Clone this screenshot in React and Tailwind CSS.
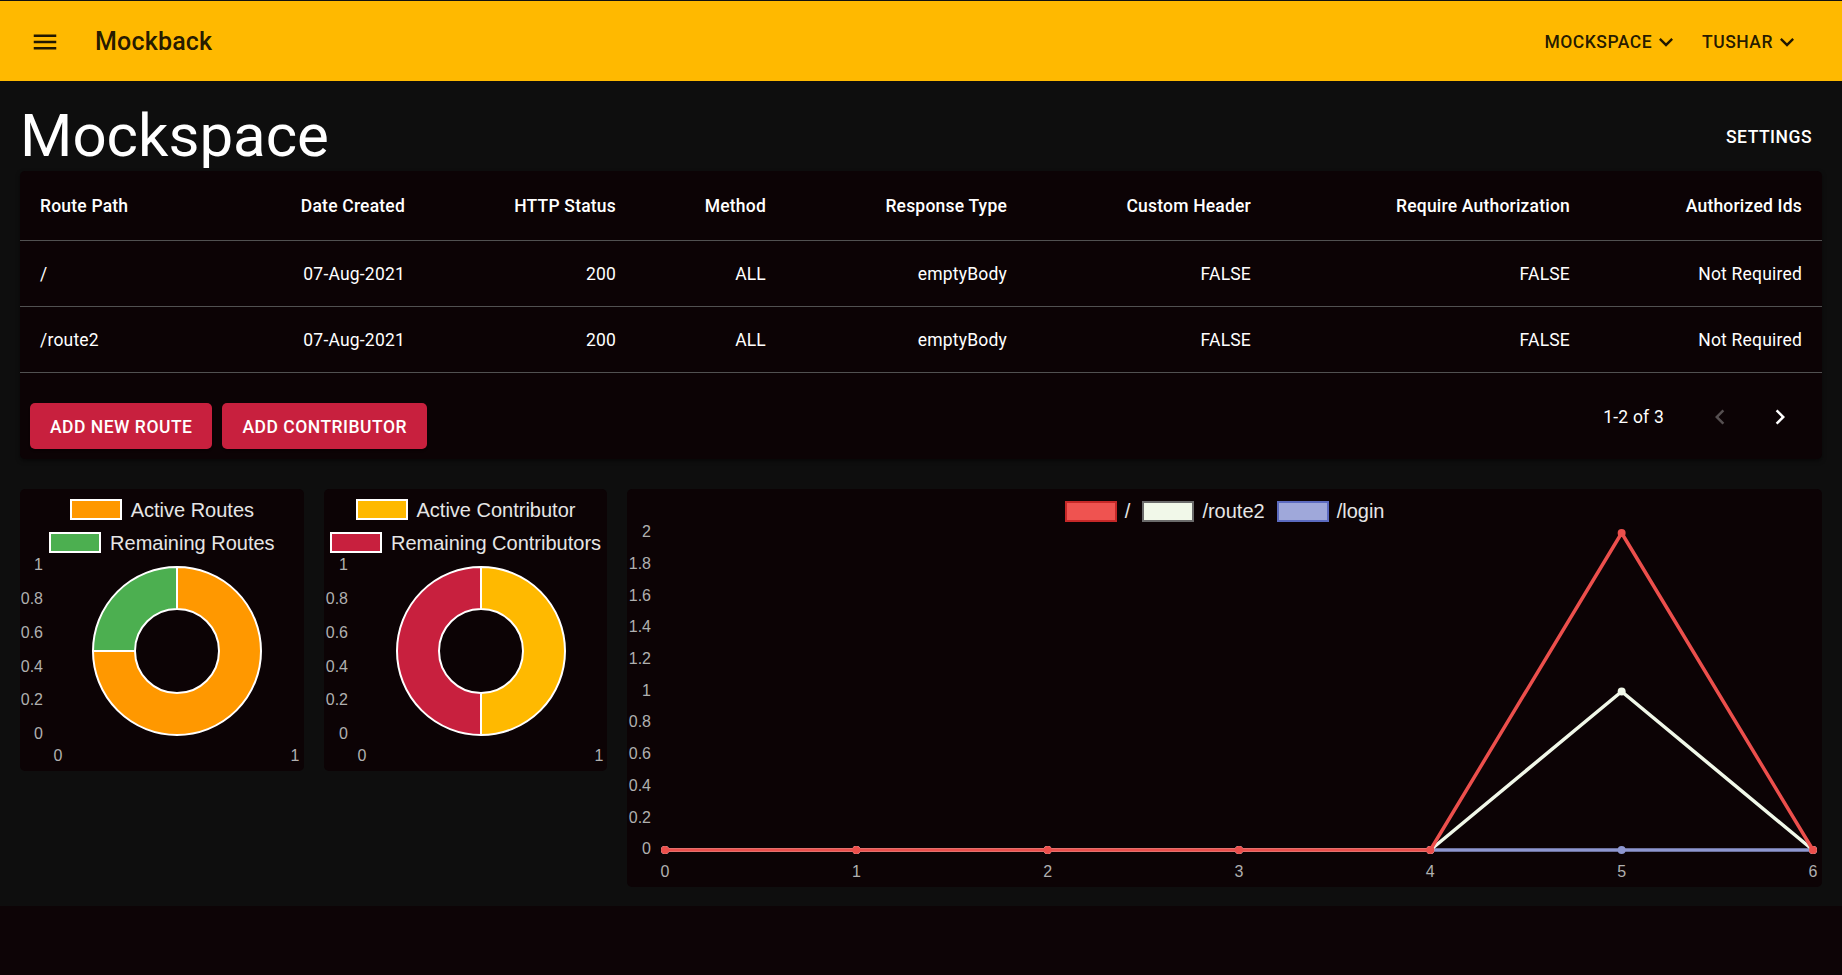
import React from "react";

const cols = "grid grid-cols-[200px_205px_211px_150px_241px_244px_319px_232px]";

const headers = [
  "Route Path",
  "Date Created",
  "HTTP Status",
  "Method",
  "Response Type",
  "Custom Header",
  "Require Authorization",
  "Authorized Ids",
];

const routes = [
  ["/", "07-Aug-2021", "200", "ALL", "emptyBody", "FALSE", "FALSE", "Not Required"],
  ["/route2", "07-Aug-2021", "200", "ALL", "emptyBody", "FALSE", "FALSE", "Not Required"],
];

const chartFont = "'Liberation Sans', Arial, sans-serif";

function arc(cx, cy, r, r0, a0, a1) {
  const p = (rad, a) => [
    cx + rad * Math.sin((a * Math.PI) / 180),
    cy - rad * Math.cos((a * Math.PI) / 180),
  ];
  const large = a1 - a0 > 180 ? 1 : 0;
  const [x0, y0] = p(r, a0);
  const [x1, y1] = p(r, a1);
  const [x2, y2] = p(r0, a1);
  const [x3, y3] = p(r0, a0);
  return `M${x0} ${y0} A${r} ${r} 0 ${large} 1 ${x1} ${y1} L${x2} ${y2} A${r0} ${r0} 0 ${large} 0 ${x3} ${y3} Z`;
}

function ChevronDown() {
  return (
    <svg width="28" height="28" viewBox="0 0 24 24" fill="currentColor">
      <path d="M16.59 8.59 12 13.17 7.41 8.59 6 10l6 6 6-6z" />
    </svg>
  );
}

function LegendBox({ fill, border }) {
  return (
    <span
      className="inline-block w-[52px] h-[21px] border-2"
      style={{ background: fill, borderColor: border }}
    />
  );
}

function DoughnutCard({ legend, segments, labelRight, width }) {
  const ticks = ["1", "0.8", "0.6", "0.4", "0.2", "0"];
  return (
    <div className="col-span-2 h-[282px] rounded-[5px] bg-[#0c0305]">
      <div className="flex flex-col items-center pt-[4px] h-[72px]">
        {legend.map((l) => (
          <div key={l.label} className="flex items-center gap-[9px] h-[33px]">
            <LegendBox fill={l.color} border="#ffffff" />
            <span className="text-[20px] text-[#e6e6e6] font-['Liberation_Sans',Arial,sans-serif]">
              {l.label}
            </span>
          </div>
        ))}
      </div>
      <svg width={width} height="210" fontFamily={chartFont} className="overflow-visible">
        {ticks.map((t, i) => (
          <text
            key={t}
            x={labelRight}
            y={5 + i * 33.8}
            textAnchor="end"
            dominantBaseline="middle"
            fontSize="16"
            fill="#b0b0b0"
          >
            {t}
          </text>
        ))}
        <text x="38" y="196" textAnchor="middle" dominantBaseline="middle" fontSize="16" fill="#b0b0b0">
          0
        </text>
        <text x="275" y="196" textAnchor="middle" dominantBaseline="middle" fontSize="16" fill="#b0b0b0">
          1
        </text>
        {segments.map((s, i) => (
          <path
            key={i}
            d={arc(157, 90, 84, 42, s.from, s.to)}
            fill={s.color}
            stroke="#ffffff"
            strokeWidth="2"
          />
        ))}
      </svg>
    </div>
  );
}

function LineCard() {
  const x0 = 38;
  const step = 191.33;
  const yZero = 321;
  const unit = 158.5;
  const yTicks = ["2", "1.8", "1.6", "1.4", "1.2", "1", "0.8", "0.6", "0.4", "0.2", "0"];
  const sets = [
    { label: "/login", color: "#9fa8da", border: "#5c6bc0", line: "#8e97d0", data: [0, 0, 0, 0, 0, 0, 0] },
    { label: "/route2", color: "#f1f8e9", border: "#6b6b6b", line: "#f1f8e9", data: [0, 0, 0, 0, 0, 1, 0] },
    { label: "/", color: "#ef5350", border: "#c62828", line: "#ec4f4c", data: [0, 0, 0, 0, 0, 2, 0] },
  ];
  const legend = [sets[2], sets[1], sets[0]];

  return (
    <div className="col-span-8 h-[398px] rounded-[5px] bg-[#0c0305]">
      <div className="flex items-center justify-center gap-[12px] h-[40px] pt-[4px]">
        {legend.map((s) => (
          <div key={s.label} className="flex items-center gap-[8px]">
            <LegendBox fill={s.color} border={s.border} />
            <span className="text-[20px] text-[#e6e6e6] font-['Liberation_Sans',Arial,sans-serif]">
              {s.label}
            </span>
          </div>
        ))}
      </div>
      <svg width="1195" height="358" fontFamily={chartFont} className="overflow-visible">
        {yTicks.map((t, i) => (
          <text
            key={t}
            x="24"
            y={4 + i * 31.7}
            textAnchor="end"
            dominantBaseline="middle"
            fontSize="16"
            fill="#b0b0b0"
          >
            {t}
          </text>
        ))}
        {[0, 1, 2, 3, 4, 5, 6].map((n) => (
          <text
            key={n}
            x={x0 + n * step}
            y="344"
            textAnchor="middle"
            dominantBaseline="middle"
            fontSize="16"
            fill="#b0b0b0"
          >
            {n}
          </text>
        ))}
        {sets.map((s) => (
          <g key={s.label}>
            <polyline
              points={s.data.map((v, i) => `${x0 + i * step},${yZero - v * unit}`).join(" ")}
              fill="none"
              stroke={s.line}
              strokeWidth="3.5"
              strokeLinejoin="round"
            />
            {s.data.map((v, i) => (
              <circle key={i} cx={x0 + i * step} cy={yZero - v * unit} r="4" fill={s.line} />
            ))}
          </g>
        ))}
      </svg>
    </div>
  );
}

export default function App() {
  return (
    <div className="min-h-screen bg-[#0d0406] font-['Roboto',sans-serif]">
      <header className="h-[81px] border-t border-[#111111] bg-[#ffb900] flex items-center pt-[2px] pl-[30px] pr-[41px] text-[rgba(0,0,0,0.87)]">
        <svg width="30" height="30" viewBox="0 0 24 24" fill="currentColor">
          <path d="M3 18h18v-2H3v2zm0-5h18v-2H3v2zm0-7v2h18V6H3z" />
        </svg>
        <h1 className="ml-[35px] text-[25px] font-medium leading-[40px] tracking-[0.2px]">Mockback</h1>
        <div className="ml-auto flex items-center text-[17.5px] font-medium uppercase tracking-[0.5px]">
          <span>Mockspace</span>
          <ChevronDown />
          <span className="ml-[22px]">Tushar</span>
          <ChevronDown />
        </div>
      </header>

      <main className="bg-[#0e0e0e] px-[20px] pt-[20px] pb-[19px] text-white">
        <div className="flex items-center justify-between h-[70px]">
          <h2 className="text-[60px] leading-[70px] font-normal">Mockspace</h2>
          <button className="px-[10px] pt-[9px] pb-[7px] text-[17.5px] font-medium uppercase tracking-[0.5px]">
            Settings
          </button>
        </div>

        <div className="rounded-[5px] bg-[#0c0305] shadow-[0_2px_4px_rgba(0,0,0,0.5)] tracking-[0.2px]">
          <div className={`${cols} h-[70px] items-center border-b border-[#515151] text-[17.5px] font-medium pt-[2px]`}>
            {headers.map((h, i) => (
              <div key={h} className={`px-[20px] ${i === 0 ? "text-left" : "text-right"}`}>
                {h}
              </div>
            ))}
          </div>
          {routes.map((r) => (
            <div
              key={r[0]}
              className={`${cols} h-[66px] items-center border-b border-[#515151] text-[17.5px] pt-[2px]`}
            >
              {r.map((c, i) => (
                <div key={i} className={`px-[20px] ${i === 0 ? "text-left" : "text-right"}`}>
                  {c}
                </div>
              ))}
            </div>
          ))}
          <div className="flex justify-between h-[86px]">
            <div className="flex gap-[10px] pl-[10px] pt-[30px]">
              <button className="h-[46px] px-[20px] pt-[2px] rounded-[5px] bg-[#c8203e] text-[17.5px] font-medium uppercase tracking-[0.5px] shadow-[0_3px_1px_-2px_rgba(0,0,0,0.2),0_2px_2px_rgba(0,0,0,0.14)]">
                Add New Route
              </button>
              <button className="h-[46px] px-[20px] pt-[2px] rounded-[5px] bg-[#c8203e] text-[17.5px] font-medium uppercase tracking-[0.5px] shadow-[0_3px_1px_-2px_rgba(0,0,0,0.2),0_2px_2px_rgba(0,0,0,0.14)]">
                Add Contributor
              </button>
            </div>
            <div className="flex items-center h-[88px] pr-[12px] text-[17.5px]">
              <span>1-2 of 3</span>
              <button className="ml-[26px] p-[15px] text-[rgba(255,255,255,0.3)]">
                <svg width="30" height="30" viewBox="0 0 24 24" fill="currentColor">
                  <path d="M15.41 7.41 14 6l-6 6 6 6 1.41-1.41L10.83 12z" />
                </svg>
              </button>
              <button className="p-[15px] text-white">
                <svg width="30" height="30" viewBox="0 0 24 24" fill="currentColor">
                  <path d="M10 6 8.59 7.41 13.17 12l-4.58 4.59L10 18l6-6z" />
                </svg>
              </button>
            </div>
          </div>
        </div>

        <div className="grid grid-cols-12 gap-[20px] mt-[30px] items-start">
          <DoughnutCard
            width={284}
            labelRight={23}
            legend={[
              { label: "Active Routes", color: "#ff9800" },
              { label: "Remaining Routes", color: "#4caf50" },
            ]}
            segments={[
              { from: 0, to: 270, color: "#ff9800" },
              { from: 270, to: 360, color: "#4caf50" },
            ]}
          />
          <DoughnutCard
            width={282}
            labelRight={24}
            legend={[
              { label: "Active Contributor", color: "#ffb900" },
              { label: "Remaining Contributors", color: "#c8203e" },
            ]}
            segments={[
              { from: 0, to: 180, color: "#ffb900" },
              { from: 180, to: 360, color: "#c8203e" },
            ]}
          />
          <LineCard />
        </div>
      </main>
    </div>
  );
}
